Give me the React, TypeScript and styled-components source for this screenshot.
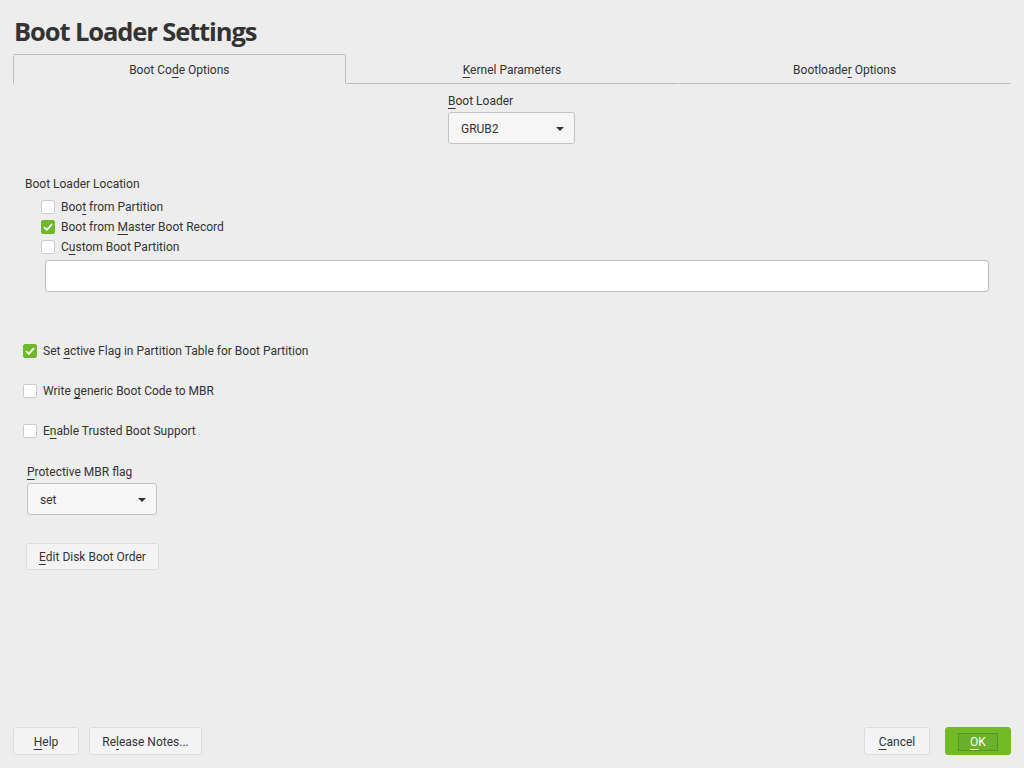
import React from "react";
import styled, { createGlobalStyle } from "styled-components";

const Global = createGlobalStyle`
  html, body { margin: 0; padding: 0; background: #ededed; }
  body { font-family: Roboto, "Liberation Sans", sans-serif; color: #333; font-size: 12px; }
  * { box-sizing: border-box; }
`;

const Page = styled.div`
  display: flex;
  flex-direction: column;
  height: 768px;
  padding: 0 13px;
`;

const Title = styled.h1`
  margin: 13px 0 0 1px;
  font-family: "Open Sans", "Liberation Sans", sans-serif;
  font-weight: 700;
  font-size: 25.5px;
  line-height: 36px;
  color: #333;
  letter-spacing: -1.1px;
`;

const TabBar = styled.div`
  display: grid;
  grid-template-columns: repeat(3, 1fr);
  height: 30px;
  margin-top: 5px;
`;

const Tab = styled.div<{ $active?: boolean }>`
  display: flex;
  align-items: center;
  justify-content: center;
  font-size: 12px;
  color: #333;
  padding-top: 2px;
  border-bottom: 1px solid ${(p) => (p.$active ? "transparent" : "#bcbcbc")};
  border-top: 1px solid ${(p) => (p.$active ? "#bcbcbc" : "transparent")};
  border-left: 1px solid ${(p) => (p.$active ? "#bcbcbc" : "transparent")};
  border-right: 1px solid ${(p) => (p.$active ? "#bcbcbc" : "transparent")};
  border-radius: ${(p) => (p.$active ? "2px 2px 0 0" : "0")};
`;

const U = styled.span`
  text-decoration: underline;
  text-underline-offset: 3px;
`;

const Content = styled.div`
  display: flex;
  flex-direction: column;
`;

const CenterGroup = styled.div`
  display: flex;
  flex-direction: column;
  align-self: center;
  margin-top: 8px;
  margin-right: 1px;
`;

const FieldLabel = styled.div`
  font-size: 12px;
  line-height: 18px;
  color: #333;
`;

const Combo = styled.div<{ $w: number }>`
  display: flex;
  align-items: center;
  justify-content: space-between;
  width: ${(p) => p.$w}px;
  height: 32px;
  margin-top: 2px;
  padding: 1px 10px 0 12px;
  background: #f6f6f6;
  border: 1px solid #c2c2c2;
  border-radius: 3px;
  font-size: 12px;
  color: #333;
`;

const Caret = styled.span`
  width: 0;
  height: 0;
  border-left: 4px solid transparent;
  border-right: 4px solid transparent;
  border-top: 4px solid #333;
`;

const Group = styled.div`
  display: flex;
  flex-direction: column;
  margin-top: 31px;
  padding-left: 12px;
`;

const GroupItems = styled.div`
  display: flex;
  flex-direction: column;
  padding-left: 16px;
  margin-top: 4px;
`;

const CheckRow = styled.label<{ $gap?: number }>`
  display: flex;
  align-items: center;
  height: 20px;
  gap: 6px;
  margin-top: ${(p) => p.$gap ?? 0}px;
  font-size: 12px;
  color: #333;
`;

const Box = styled.span<{ $on?: boolean }>`
  display: inline-flex;
  align-items: center;
  justify-content: center;
  width: 14px;
  height: 14px;
  border-radius: 2px;
  background: ${(p) => (p.$on ? "#6eb82a" : "#ffffff")};
  border: 1px solid ${(p) => (p.$on ? "#6eb82a" : "#c8cbd3")};
`;

const TextInput = styled.div`
  height: 32px;
  margin: 3px 22px 0 32px;
  background: #fff;
  border: 1px solid #bdbdbd;
  border-radius: 3px;
`;

const Options = styled.div`
  display: flex;
  flex-direction: column;
  padding-left: 10px;
  margin-top: 49px;
`;

const MbrGroup = styled.div`
  display: flex;
  flex-direction: column;
  padding-left: 14px;
  margin-top: 22px;
`;

const Button = styled.div<{ $w: number; $h?: number; $primary?: boolean }>`
  display: inline-flex;
  align-items: center;
  justify-content: center;
  width: ${(p) => p.$w}px;
  height: ${(p) => p.$h ?? 28}px;
  padding-top: 1px;
  background: ${(p) => (p.$primary ? "#73ba25" : "#f4f4f4")};
  border: 1px solid ${(p) => (p.$primary ? "#73ba25" : "#dcdcdc")};
  border-radius: 3px;
  font-size: 12px;
  color: ${(p) => (p.$primary ? "#fff" : "#333")};
`;

const Focus = styled.span`
  display: inline-flex;
  align-items: center;
  justify-content: center;
  width: 40px;
  height: 18px;
  border: 1px solid #4f9a1c;
  background: #6ab02c;
`;

const EditBtnWrap = styled.div`
  padding-left: 13px;
  margin-top: 28px;
`;

const Footer = styled.div`
  margin-top: auto;
  display: flex;
  align-items: center;
  gap: 10px;
  padding-bottom: 13px;
`;

const Spacer = styled.div`
  flex: 1;
`;

const RightGroup = styled.div`
  display: flex;
  gap: 15px;
`;

const Check = () => (
  <svg width="10" height="8" viewBox="0 0 10 8">
    <path d="M1 4.2 L3.8 6.8 L9 1.2" fill="none" stroke="#fff" strokeWidth="1.8" />
  </svg>
);

const CB = ({ on, children, gap }: { on?: boolean; children: React.ReactNode; gap?: number }) => (
  <CheckRow $gap={gap}>
    <Box $on={on}>{on && <Check />}</Box>
    <span>{children}</span>
  </CheckRow>
);

export default function App() {
  return (
    <>
      <Global />
      <Page>
        <Title>Boot Loader Settings</Title>
        <TabBar>
          <Tab $active>
            <span>
              Boot Co<U>d</U>e Options
            </span>
          </Tab>
          <Tab>
            <span>
              <U>K</U>ernel Parameters
            </span>
          </Tab>
          <Tab>
            <span>
              Bootloade<U>r</U> Options
            </span>
          </Tab>
        </TabBar>
        <Content>
          <CenterGroup>
            <FieldLabel>
              <U>B</U>oot Loader
            </FieldLabel>
            <Combo $w={127}>
              <span>GRUB2</span>
              <Caret />
            </Combo>
          </CenterGroup>
          <Group>
            <FieldLabel>Boot Loader Location</FieldLabel>
            <GroupItems>
              <CB>
                Boo<U>t</U> from Partition
              </CB>
              <CB on>
                Boot from <U>M</U>aster Boot Record
              </CB>
              <CB>
                C<U>u</U>stom Boot Partition
              </CB>
            </GroupItems>
          </Group>
          <TextInput />
          <Options>
            <CB on>
              Set <U>a</U>ctive Flag in Partition Table for Boot Partition
            </CB>
            <CB gap={20}>
              Write <U>g</U>eneric Boot Code to MBR
            </CB>
            <CB gap={20}>
              E<U>n</U>able Trusted Boot Support
            </CB>
          </Options>
          <MbrGroup>
            <FieldLabel>
              <U>P</U>rotective MBR flag
            </FieldLabel>
            <Combo $w={130}>
              <span>set</span>
              <Caret />
            </Combo>
          </MbrGroup>
          <EditBtnWrap>
            <Button $w={133} $h={27}>
              <span>
                <U>E</U>dit Disk Boot Order
              </span>
            </Button>
          </EditBtnWrap>
        </Content>
        <Footer>
          <Button $w={66}>
            <span>
              <U>H</U>elp
            </span>
          </Button>
          <Button $w={113}>
            <span>
              Re<U>l</U>ease Notes...
            </span>
          </Button>
          <Spacer />
          <RightGroup>
            <Button $w={66}>
              <span>
                <U>C</U>ancel
              </span>
            </Button>
            <Button $w={66} $primary>
              <Focus>
                <U>O</U>K
              </Focus>
            </Button>
          </RightGroup>
        </Footer>
      </Page>
    </>
  );
}
